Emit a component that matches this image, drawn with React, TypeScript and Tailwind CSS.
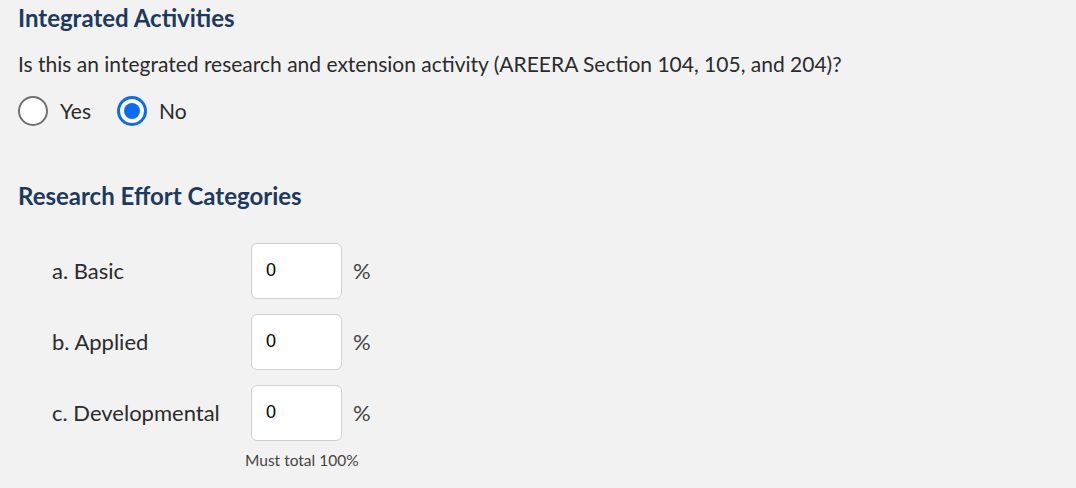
function Radio({ label, checked }: { label: string; checked?: boolean }) {
  return (
    <label className="flex items-center gap-3">
      {checked ? (
        <span className="flex h-[30px] w-[30px] items-center justify-center rounded-full border-[3px] border-[#0b6cf0] bg-white">
          <span className="h-[16px] w-[16px] rounded-full bg-[#0b6cf0]" />
        </span>
      ) : (
        <span className="h-[30px] w-[30px] rounded-full border-2 border-[#707070] bg-white" />
      )}
      <span className="text-[21px] text-[#2b2b2b]">{label}</span>
    </label>
  )
}

function PercentRow({ label }: { label: string }) {
  return (
    <div className="flex items-center">
      <span className="w-[233px] shrink-0 pl-[34px] text-[22px] text-[#2b2b2b]">{label}</span>
      <div className="flex h-[56px] w-[91px] shrink-0 items-center rounded-md border border-[#d0d0d0] bg-white pl-[14px] font-['Liberation_Sans',sans-serif] text-[18px] text-black">
        0
      </div>
      <span className="ml-[11px] text-[22px] text-[#444]">%</span>
    </div>
  )
}

export default function App() {
  return (
    <div className="min-h-screen bg-[#f2f2f2] px-[18px] pt-[3px] font-['Lato',sans-serif]">
      <h2 className="text-[24px] font-bold leading-[30px] text-[#1d3a5e]">Integrated Activities</h2>
      <p className="mt-[18px] text-[21px] leading-[26px] text-[#2b2b2b]">
        Is this an integrated research and extension activity (AREERA Section 104, 105, and 204)?
      </p>
      <div className="mt-[18px] flex items-center gap-[26px]">
        <Radio label="Yes" />
        <Radio label="No" checked />
      </div>

      <h2 className="mt-[54px] text-[24px] font-bold leading-[30px] text-[#1d3a5e]">
        Research Effort Categories
      </h2>
      <div className="mt-[32px] flex flex-col gap-[15px]">
        <PercentRow label="a. Basic" />
        <PercentRow label="b. Applied" />
        <PercentRow label="c. Developmental" />
      </div>
      <p className="ml-[227px] mt-[8px] text-[15.5px] text-[#444]">Must total 100%</p>
    </div>
  )
}
